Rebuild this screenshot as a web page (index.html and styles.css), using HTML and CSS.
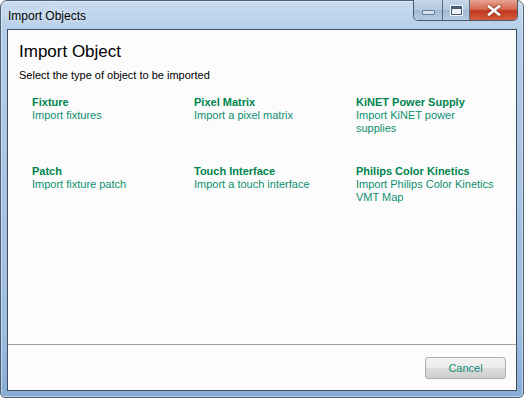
FILE: index.html
```html
<!DOCTYPE html>
<html>
<head>
<meta charset="utf-8">
<link rel="stylesheet" href="styles.css">
</head>
<body>
<div class="window">
  <div class="titlebar">
    <div class="title">Import Objects</div>
    <div class="caption-buttons">
      <div class="cbtn min"><span class="min-glyph"></span></div>
      <div class="cbtn max"><span class="max-glyph"></span></div>
      <div class="cbtn close">
        <svg width="14" height="11" viewBox="0 0 14 11"><path d="M2 1.5 L12 9.5 M12 1.5 L2 9.5" stroke="#fff" stroke-width="2.6" stroke-linecap="square"/><path d="M2 1.5 L12 9.5 M12 1.5 L2 9.5" stroke="#fff" stroke-width="1.6"/></svg>
      </div>
    </div>
  </div>
  <div class="client">
    <div class="main">
      <h1 class="heading">Import Object</h1>
      <p class="subtitle">Select the type of object to be imported</p>
      <div class="grid">
        <div class="item"><div class="item-title">Fixture</div><div class="item-desc">Import fixtures</div></div>
        <div class="item"><div class="item-title">Pixel Matrix</div><div class="item-desc">Import a pixel matrix</div></div>
        <div class="item"><div class="item-title">KiNET Power Supply</div><div class="item-desc">Import KiNET power<br>supplies</div></div>
        <div class="item"><div class="item-title">Patch</div><div class="item-desc">Import fixture patch</div></div>
        <div class="item"><div class="item-title">Touch Interface</div><div class="item-desc">Import a touch interface</div></div>
        <div class="item"><div class="item-title">Philips Color Kinetics</div><div class="item-desc">Import Philips Color Kinetics<br>VMT Map</div></div>
      </div>
    </div>
    <div class="footer">
      <button class="cancel">Cancel</button>
    </div>
  </div>
</div>
</body>
</html>
```
FILE: styles.css
```css
html, body {
  margin: 0;
  padding: 0;
  background: #ffffff;
}
body {
  width: 524px;
  height: 398px;
  overflow: hidden;
  font-family: "Liberation Sans", Arial, sans-serif;
}
.window {
  box-sizing: border-box;
  width: 524px;
  height: 398px;
  border: 1px solid #4f5f73;
  border-radius: 7px 7px 5px 5px;
  background: linear-gradient(to bottom, #c9dcf0 0px, #b4cde8 30px, #a7c3e3 200px, #9fbde0 330px, #86abd6 398px);
  display: flex;
  flex-direction: column;
  padding: 0 6px 6px 6px;
  box-shadow: inset 0 0 0 1px rgba(255,255,255,0.45);
}
.titlebar {
  height: 28px;
  display: flex;
  align-items: flex-start;
  justify-content: space-between;
  flex: none;
}
.title {
  font-size: 12px;
  color: #000;
  padding-left: 1px;
  margin-top: 8px;
  line-height: 14px;
  text-shadow: 0 0 6px rgba(255,255,255,0.9);
}
.caption-buttons {
  display: flex;
  margin-top: -1px;
  margin-right: -1px;
  height: 20px;
  border: 1px solid #4a5a6e;
  border-top: none;
  border-radius: 0 0 5px 5px;
  overflow: hidden;
}
.cbtn {
  height: 20px;
  display: flex;
  align-items: center;
  justify-content: center;
  box-sizing: border-box;
}
.min {
  width: 29px;
  background: linear-gradient(to bottom, #c6d7ea 0%, #b3c8df 50%, #a2b9d3 51%, #b5cbe2 100%);
  border-right: 1px solid #5a6b80;
}
.max {
  width: 27px;
  background: linear-gradient(to bottom, #c6d7ea 0%, #b3c8df 50%, #a2b9d3 51%, #b5cbe2 100%);
  border-right: 1px solid #5a6b80;
}
.close {
  width: 47px;
  background: linear-gradient(to bottom, #e8a493 0%, #d66a52 45%, #c2391d 55%, #d45c3c 100%);
}
.min-glyph {
  display: block;
  width: 11px;
  height: 3px;
  margin-top: 5px;
  background: #d5e1ee;
  border: 1px solid #6a7c92;
  border-radius: 1px;
}
.max-glyph {
  display: block;
  box-sizing: border-box;
  width: 11px;
  height: 9px;
  border: 1px solid #4b5c72;
  border-top-width: 3px;
  background: #eef3f9;
  box-shadow: 0 0 0 1px #f2f6fb;
}
.close svg {
  display: block;
  filter: drop-shadow(0 0 1px #5a1a0e);
}
.client {
  flex: 1;
  display: flex;
  flex-direction: column;
  background: #fcfcfc;
  border: 1px solid #3f4e60;
}
.main {
  height: 315px;
  border-bottom: 1px solid #a0a0a0;
  box-sizing: border-box;
  padding: 11px 0 0 11px;
}
.heading {
  margin: 0;
  font-family: "Liberation Sans", Arial, sans-serif;
  font-weight: 400;
  font-size: 17px;
  line-height: 22px;
  color: #000;
}
.subtitle {
  margin: 6px 0 0 0;
  font-size: 11px;
  line-height: 13px;
  color: #000;
}
.grid {
  display: grid;
  grid-template-columns: 162px 162px 162px;
  grid-auto-rows: 69px;
  margin: 14px 0 0 13px;
}
.item-title {
  font-size: 11px;
  font-weight: 700;
  line-height: 13px;
  color: #00854e;
  white-space: nowrap;
}
.item-desc {
  font-size: 11px;
  line-height: 13px;
  color: #0d9070;
  white-space: nowrap;
}
.footer {
  flex: 1;
  display: flex;
  justify-content: flex-end;
  align-items: flex-start;
  padding: 12px 10px 0 0;
}
.cancel {
  width: 81px;
  height: 22px;
  border: 1px solid #adadad;
  border-radius: 3px;
  background: linear-gradient(to bottom, #f3f3f3 0%, #ebebeb 50%, #dddddd 51%, #cfcfcf 100%);
  font-family: "Liberation Sans", Arial, sans-serif;
  font-size: 11px;
  color: #0e8f78;
  padding: 0;
}
```
